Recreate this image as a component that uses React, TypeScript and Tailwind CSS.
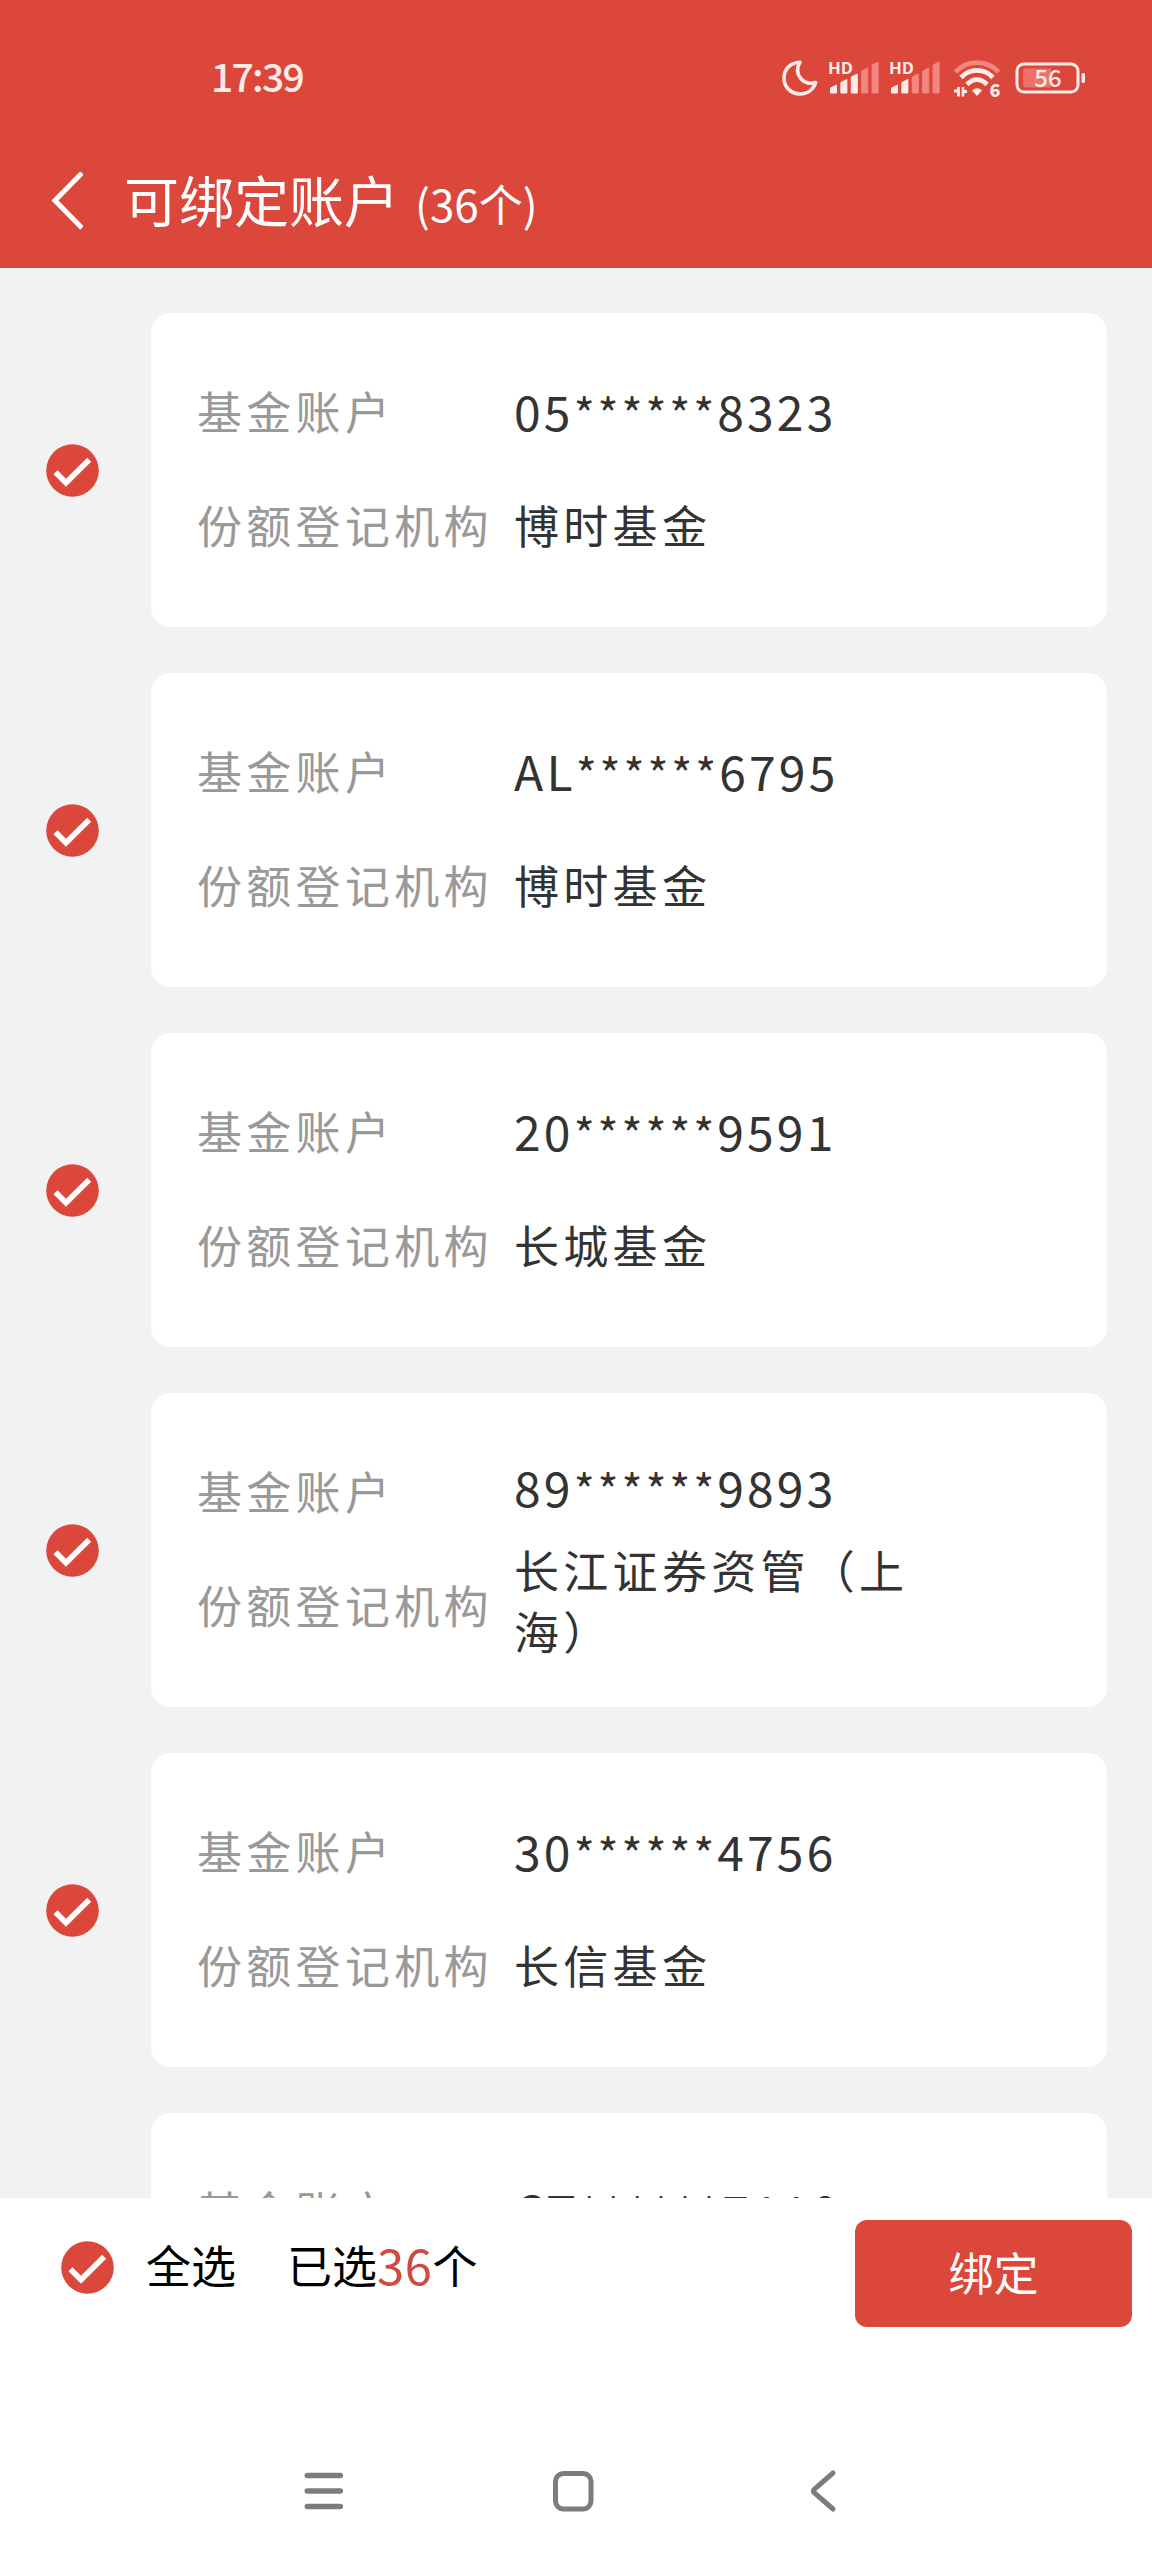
type Account = { head: string; tail: string; org?: string };

const accounts: Account[] = [
  { head: "05", tail: "8323", org: "博时基金" },
  { head: "AL", tail: "6795", org: "博时基金" },
  { head: "20", tail: "9591", org: "长城基金" },
  { head: "89", tail: "9893", org: "长江证券资管（上海）" },
  { head: "30", tail: "4756", org: "长信基金" },
  { head: "CT", tail: "7110" },
];

function CheckCircle() {
  return (
    <svg viewBox="0 0 53 53" className="size-[53px] shrink-0">
      <circle cx="26.5" cy="26.5" r="26.3" fill="#db473b" />
      <path d="M9.5 28.2 20 38.8 43.2 15.8" fill="none" stroke="#fff" strokeWidth="5.6" />
    </svg>
  );
}

function Signal({ level }: { level: number }) {
  const tops = [24, 18.5, 13, 7, 1];
  return (
    <svg viewBox="0 0 52 34" className="h-[34px] w-[52px] overflow-visible">
      <text x="-1" y="13" fontSize="16" fontWeight="700" textLength="25" lengthAdjust="spacingAndGlyphs" fill="#ffebe7">
        HD
      </text>
      {tops.map((top, i) => (
        <path
          key={top}
          d={`M${1.5 + i * 10.4} ${top + 3}l6-3V32h-6Z`}
          fill={i < level ? "#ffebe7" : "#f28781"}
          stroke={i < level ? "#ffebe7" : "#f28781"}
          strokeWidth="1"
          strokeLinejoin="round"
        />
      ))}
    </svg>
  );
}

function StatusBar() {
  return (
    <div className="flex h-[156px] items-center pl-[211px] pr-[66px] text-[#ffebe7]">
      <span className="-mt-[5px] text-[39px] font-medium tracking-[-1.7px]">17:39</span>
      <div className="ml-auto flex items-center">
        <svg viewBox="0 0 36 36" className="mr-[11px] h-9 w-9">
          <path
            d="M18 2.200C8 2.500 2 9.500 2 18c0 9 7 16 16 16 7.500 0 13.500-4.500 15.700-11.500C21 26 11 14 18 2.200Z"
            fill="none"
            stroke="currentColor"
            strokeWidth="3.600"
            strokeLinejoin="round"
          />
        </svg>
        <Signal level={3} />
        <div className="w-[9px]" />
        <Signal level={2} />
        <svg viewBox="0 0 48 38" className="ml-3 h-[38px] w-12 overflow-visible">
          <g fill="none" strokeWidth="4.800">
            <path d="M1.500 13C13 .5 33 .5 44.500 13" stroke="#f28781" />
            <path d="M7 18.500C16 9 30 9 39 18.500" stroke="currentColor" />
            <path d="M13 25.500C19 19 27 19 33 25.500" stroke="currentColor" />
          </g>
          <path d="M18 31.500q5-4.500 10 0L23 37Z" fill="currentColor" />
          <path d="M0 32h4.500M4.500 28v9.500M9 37.500V28l0 4.500h4" fill="none" stroke="currentColor" strokeWidth="2.800" />
          <text x="35.500" y="38" fontSize="18" fontWeight="900" fill="currentColor">
            6
          </text>
        </svg>
        <svg viewBox="0 0 72 34" className="ml-3 h-[34px] w-[72px] overflow-visible">
          <rect x="3" y="3" width="61" height="28" rx="7" fill="none" stroke="currentColor" strokeWidth="3" />
          <path d="M12 7.500h25v19H12a3 3 0 0 1-3-3v-13a3 3 0 0 1 3-3Z" fill="#ec736a" />
          <rect x="67.500" y="12" width="3.500" height="10" rx="1.500" fill="currentColor" />
          <text x="34" y="25.500" fontSize="24" fontWeight="500" textAnchor="middle" fill="currentColor">
            56
          </text>
        </svg>
      </div>
    </div>
  );
}

function AccountRow({ head, tail, org }: Account) {
  // long organisation names wrap onto a second line and push the number up
  const wraps = org !== undefined && org.length > 8;
  return (
    <li className="flex h-[314px] shrink-0 items-center pl-[46px] pr-[45px]">
      <CheckCircle />
      <div className="ml-[52px] flex h-full flex-1 rounded-[20px] bg-white pl-[46px] pt-[41px] text-[45px] tracking-[4.3px]">
        <div className="w-[317px] whitespace-nowrap text-[#999]">
          <div className="flex h-[113px] items-center">基金账户</div>
          {org && <div className="flex h-[115px] items-center">份额登记机构</div>}
        </div>
        <div className="w-[410px] text-[#333]">
          <div className={`flex items-center pb-[2px] ${wraps ? "h-[105px]" : "h-[113px]"}`}>
            <span className="text-[48px] tracking-[3.2px]">{head}</span>
            <span className="pt-[6px] tracking-[2.900px]">******</span>
            <span className="text-[48px] tracking-[3.2px]">{tail}</span>
          </div>
          {org && <div className={wraps ? "leading-[61px]" : "leading-[115px]"}>{org}</div>}
        </div>
      </div>
    </li>
  );
}

export default function App() {
  return (
    <div className="flex h-[2560px] w-[1152px] flex-col overflow-hidden bg-white font-['Noto_Sans_CJK_SC',sans-serif]">
      <header className="h-[268px] shrink-0 bg-[#db473b] text-white">
        <StatusBar />
        <div className="flex h-[90px] items-center pl-[51px]">
          <svg viewBox="0 0 32 58" className="h-[58px] w-8">
            <path d="M31 1 4 28.500 31 56" fill="none" stroke="currentColor" strokeWidth="5" />
          </svg>
          <h1 className="-mt-[5px] ml-[41px] flex items-baseline text-[55px]">
            可绑定账户<span className="ml-[16px] text-[44px]">(36个)</span>
          </h1>
        </div>
      </header>

      <ul className="flex h-[1930px] shrink-0 flex-col gap-[46px] overflow-hidden bg-[#f2f2f2] pt-[45px]">
        {accounts.map((account) => (
          <AccountRow key={account.head} {...account} />
        ))}
      </ul>

      <div className="flex h-[242px] shrink-0 items-start pl-[61px] pr-5 pt-[22px] text-[45px] text-black">
        <div className="flex h-[94px] items-center">
          <CheckCircle />
          <span className="-mt-1 ml-[32px]">全选</span>
          <span className="-mt-1 ml-[51px] flex items-center">
            已选<span className="-mt-[2px] text-[49px] tracking-[0.5px] text-[#d04a42]">36</span>个
          </span>
        </div>
        <button className="ml-auto h-[107px] w-[277px] rounded-[12px] bg-[#db473b] pb-1 text-white">绑定</button>
      </div>

      <nav className="flex h-[102px] items-center pl-[302px] text-[#7c7c7c]">
        <svg viewBox="0 0 44 44" className="size-11" stroke="currentColor" strokeWidth="5.600" strokeLinecap="round">
          <path d="M5.300 6.500h33M5.300 22h33M5.300 37.500h33" />
        </svg>
        <svg viewBox="0 0 44 44" className="ml-[205px] size-11" fill="none" stroke="currentColor" strokeWidth="5">
          <rect x="4.500" y="4.500" width="35.500" height="35.500" rx="8" />
        </svg>
        <svg viewBox="0 0 44 44" className="ml-[210px] size-11" fill="none" stroke="currentColor" strokeWidth="5" strokeLinecap="round">
          <path d="M28 4 9.500 20Q7.500 22 9.500 24L28 40" />
        </svg>
      </nav>
    </div>
  );
}
